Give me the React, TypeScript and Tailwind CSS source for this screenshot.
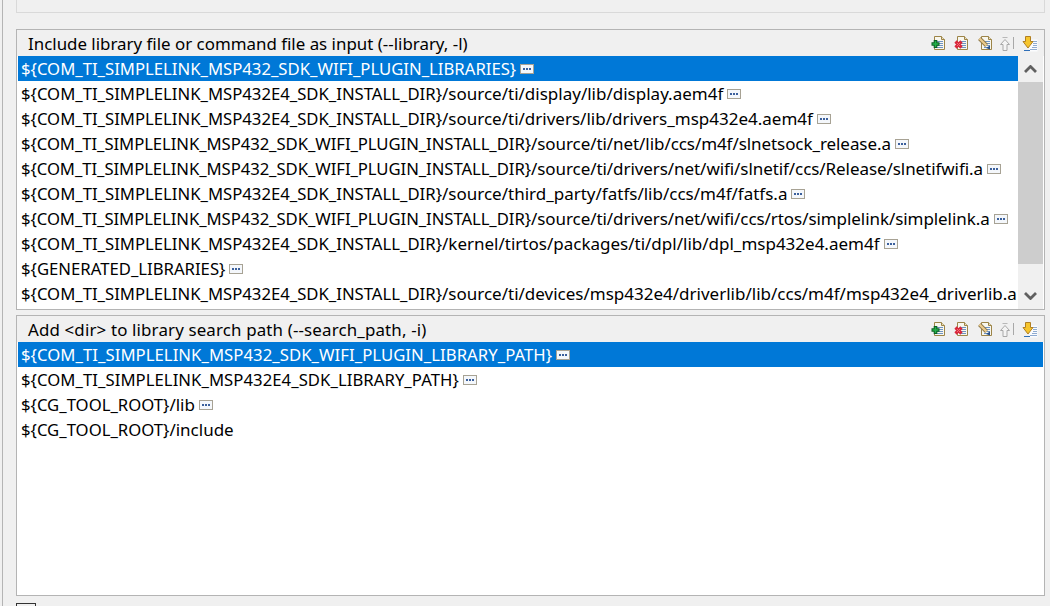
const FONT = "font-['Noto_Sans','Liberation_Sans',sans-serif]";

const LIBRARIES = [
  "${COM_TI_SIMPLELINK_MSP432_SDK_WIFI_PLUGIN_LIBRARIES}",
  "${COM_TI_SIMPLELINK_MSP432E4_SDK_INSTALL_DIR}/source/ti/display/lib/display.aem4f",
  "${COM_TI_SIMPLELINK_MSP432E4_SDK_INSTALL_DIR}/source/ti/drivers/lib/drivers_msp432e4.aem4f",
  "${COM_TI_SIMPLELINK_MSP432_SDK_WIFI_PLUGIN_INSTALL_DIR}/source/ti/net/lib/ccs/m4f/slnetsock_release.a",
  "${COM_TI_SIMPLELINK_MSP432_SDK_WIFI_PLUGIN_INSTALL_DIR}/source/ti/drivers/net/wifi/slnetif/ccs/Release/slnetifwifi.a",
  "${COM_TI_SIMPLELINK_MSP432E4_SDK_INSTALL_DIR}/source/third_party/fatfs/lib/ccs/m4f/fatfs.a",
  "${COM_TI_SIMPLELINK_MSP432_SDK_WIFI_PLUGIN_INSTALL_DIR}/source/ti/drivers/net/wifi/ccs/rtos/simplelink/simplelink.a",
  "${COM_TI_SIMPLELINK_MSP432E4_SDK_INSTALL_DIR}/kernel/tirtos/packages/ti/dpl/lib/dpl_msp432e4.aem4f",
  "${GENERATED_LIBRARIES}",
  "${COM_TI_SIMPLELINK_MSP432E4_SDK_INSTALL_DIR}/source/ti/devices/msp432e4/driverlib/lib/ccs/m4f/msp432e4_driverlib.a",
];

const SEARCH_PATHS = [
  "${COM_TI_SIMPLELINK_MSP432_SDK_WIFI_PLUGIN_LIBRARY_PATH}",
  "${COM_TI_SIMPLELINK_MSP432E4_SDK_LIBRARY_PATH}",
  "${CG_TOOL_ROOT}/lib",
  "${CG_TOOL_ROOT}/include",
];

function Page() {
  return (
    <>
      <path d="M3.500 1.500h7l3 3v10h-10z" fill="#f8f7ee" stroke="#9c8448" />
      <path d="M10.500 1.500v3h3" fill="#e8dfc0" stroke="#9c8448" />
      <path d="M6 6.500h6M6 8.500h6M6 10.500h6M6 12.500h6" stroke="#6f93c2" />
    </>
  );
}

function AddIcon() {
  return (
    <svg width="16" height="16" viewBox="0 0 16 16" className="shrink-0">
      <Page />
      <path d="M4.500 5v8M.5 9h8" stroke="#0b5f22" strokeWidth="3.600" />
      <path d="M4.500 6v6M1.500 9h6" stroke="#25b04a" strokeWidth="1.600" />
    </svg>
  );
}

function RemoveIcon() {
  return (
    <svg width="16" height="16" viewBox="0 0 16 16" className="shrink-0">
      <Page />
      <path d="M1.500 6.500l6 6M7.500 6.500l-6 6" stroke="#d8283c" strokeWidth="3.200" />
      <path d="M3 8l3 3M6 8l-3 3" stroke="#f26a72" strokeWidth="1" />
    </svg>
  );
}

function EditIcon() {
  return (
    <svg width="16" height="16" viewBox="0 0 16 16" className="shrink-0">
      <Page />
      <path d="M1.500 3.500l7 7" stroke="#8f7a4a" strokeWidth="4" />
      <path d="M1.500 3.500l7 7" stroke="#eccb8c" strokeWidth="2.200" />
      <path d="M8 13l4 1.500v-4z" fill="#27508c" />
    </svg>
  );
}

function UpIcon() {
  return (
    <svg width="10" height="16" viewBox="0 0 10 16" className="shrink-0">
      <path d="M5 4.500l4.500 5H7v6H3v-6H.5z" fill="#f4f4f4" stroke="#a8a8a8" />
      <path d="M2.500 2.500h5" stroke="#b8b8b8" />
    </svg>
  );
}

function DownIcon() {
  return (
    <svg width="16" height="17" viewBox="0 0 16 17" className="shrink-0">
      <path d="M7.500 4.500h8v12h-8z" fill="#fbfcfe" />
      <path d="M11 6.500h4M11 8.500h4M11 10.500h4M10 12.500h5M8 14.500h7" stroke="#8fabd0" />
      <path d="M3.500 1.500h5v5h2.500l-5 6.500-5-6.500h2.500z" fill="#f6c52c" stroke="#b07f22" />
      <path d="M2 15.500h6" stroke="#2f6fb8" />
    </svg>
  );
}

function Toolbar() {
  return (
    <div className="ml-auto flex items-center pr-[6px]">
      <AddIcon />
      <div className="ml-[7px]">
        <RemoveIcon />
      </div>
      <div className="ml-[8px]">
        <EditIcon />
      </div>
      <div className="ml-[6px]">
        <UpIcon />
      </div>
      <div className="ml-[3px] h-[12px] w-px bg-[#a8a8a8]" />
      <div className="ml-[8px]">
        <DownIcon />
      </div>
    </div>
  );
}

function VariableBadge() {
  return (
    <span className="ml-[4px] inline-flex h-[10px] w-[14px] shrink-0 items-center justify-center gap-px border border-[#a7a294] bg-[#f4f7fb]">
      <span className="size-[2px] bg-[#3a5f9c]" />
      <span className="size-[2px] bg-[#3a5f9c]" />
      <span className="size-[2px] bg-[#3a5f9c]" />
    </span>
  );
}

function rowTracking(text: string) {
  if (text.includes("WIFI_PLUGIN_INSTALL_DIR")) return "tracking-[-0.07px]";
  if (text.includes("LIBRARY_PATH")) return "tracking-[0.05px]";
  return "";
}

function Row({ text, selected, badge }: { text: string; selected: boolean; badge: boolean }) {
  // the variable part is all caps, the path after it runs a bit wider
  const cut = text.indexOf("}") + 1;
  return (
    <div
      className={`flex h-[25px] items-center overflow-hidden whitespace-nowrap pl-[3px] ${
        selected ? "bg-[#0078d7] text-white" : "text-black"
      }`}
    >
      <span className={`shrink-0 ${rowTracking(text)}`}>
        {text.slice(0, cut)}
        <span className="text-[17px]">{text.slice(cut)}</span>
      </span>
      {badge && <VariableBadge />}
    </div>
  );
}

function Scrollbar() {
  return (
    <div className="flex w-[25px] shrink-0 flex-col bg-[#f0f0f0]">
      <div className="flex h-[26px] shrink-0 items-center justify-center">
        <svg width="13" height="8" viewBox="0 0 13 8">
          <path d="M1 7l5.500-5.500L12 7" fill="none" stroke="#606060" strokeWidth="2.800" />
        </svg>
      </div>
      <div className="h-[182px] shrink-0 bg-[#cdcdcd]" />
      <div className="mt-auto flex h-[26px] shrink-0 items-center justify-center">
        <svg width="13" height="8" viewBox="0 0 13 8">
          <path d="M1 1l5.500 5.500L12 1" fill="none" stroke="#606060" strokeWidth="2.800" />
        </svg>
      </div>
    </div>
  );
}

function ListPanel({
  title,
  titleClass,
  rows,
  scroll,
  noBadge,
  className,
}: {
  title: string;
  titleClass?: string;
  rows: string[];
  scroll?: boolean;
  noBadge: string[];
  className: string;
}) {
  return (
    <div className={`flex flex-col border border-[#b4b4b4] ${className}`}>
      <div className="flex h-[26px] shrink-0 items-center pl-[11px] text-[16.9px] text-black">
        <span className={`pt-[2px] ${titleClass ?? ""}`}>{title}</span>
        <Toolbar />
      </div>
      <div className="flex min-h-0 flex-1 bg-white px-px">
        <div className="min-w-0 flex-1">
          {rows.map((r, i) => (
            <Row key={r} text={r} selected={i === 0} badge={!noBadge.includes(r)} />
          ))}
        </div>
        {scroll && <Scrollbar />}
      </div>
    </div>
  );
}

export default function App() {
  return (
    <div className={`h-[606px] w-[1050px] overflow-hidden bg-[#f0f0f0] text-[16.7px] ${FONT}`}>
      <div className="ml-[2px] flex h-full flex-col border-l border-[#b4b4b4] pl-[13px] pr-[5px]">
        <div className="h-[13px] shrink-0 border-x border-b border-[#d9d9d9]" />
        <ListPanel
          className="mt-[16px] h-[281px] shrink-0"
          title="Include library file or command file as input (--library, -l)"
          rows={LIBRARIES}
          scroll
          noBadge={[LIBRARIES[9]]}
        />
        <ListPanel
          className="mt-[5px] h-[281px] shrink-0"
          title="Add <dir> to library search path (--search_path, -i)"
          titleClass="tracking-[0.15px]"
          rows={SEARCH_PATHS}
          noBadge={[SEARCH_PATHS[3]]}
        />
        <div className="mt-[7px] h-[3px] w-[20px] shrink-0 border border-b-0 border-[#333]" />
      </div>
    </div>
  );
}
